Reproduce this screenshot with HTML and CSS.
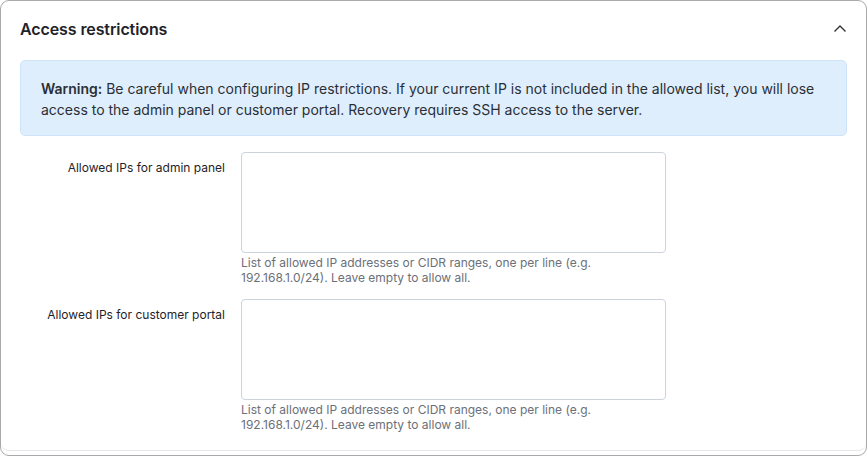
FILE: index.html
```html
<!DOCTYPE html>
<html>
<head>
  <meta charset="UTF-8">
  <title>Access restrictions</title>
  <link rel="stylesheet" href="styles.css">
</head>
<body>
<div class="frame">
  <section class="card">
    <div class="card-head">
      <h2>Access restrictions</h2>
      <svg class="chevron" width="14" height="14" viewBox="0 0 14 14"><path d="M1.5 9.5 L7 4 L12.5 9.5" fill="none" stroke="#333" stroke-width="1.4"/></svg>
    </div>

    <div class="alert">
      <b>Warning:</b> Be careful when configuring IP restrictions. If your current IP is not included in the allowed list, you will lose access to the admin panel or customer portal. Recovery requires SSH access to the server.
    </div>

    <div class="row">
      <label for="admin_ips">Allowed IPs for admin panel</label>
      <div class="field">
        <textarea id="admin_ips"></textarea>
        <p class="help">List of allowed IP addresses or CIDR ranges, one per line (e.g. 192.168.1.0/24). Leave empty to allow all.</p>
      </div>
    </div>

    <div class="row">
      <label for="portal_ips">Allowed IPs for customer portal</label>
      <div class="field">
        <textarea id="portal_ips"></textarea>
        <p class="help">List of allowed IP addresses or CIDR ranges, one per line (e.g. 192.168.1.0/24). Leave empty to allow all.</p>
      </div>
    </div>
  </section>
</div>
</body>
</html>
```

FILE: styles.css
```css
body {
  margin: 0;
  font-family: Inter, "Noto Sans", sans-serif;
  color: #1f2328;
  background: #fff;
}

.frame {
  height: 454px;
  border: 1px solid #a9a9a9;
  border-radius: 9px;
  overflow: hidden;
}

.card {
  height: 450px;
  box-sizing: border-box;
  border-bottom: 1px solid #e3e6ea;
  border-radius: 0 0 8px 8px;
  padding: 0 19px;
}

.card-head {
  display: flex;
  align-items: center;
  justify-content: space-between;
  height: 55px;
}

.card-head h2 {
  margin: 0;
  font-size: 16px;
  font-weight: 600;
  letter-spacing: -0.1px;
}

.alert {
  margin-top: 4px;
  background: #dfeefd;
  border: 1px solid #cfe3f8;
  border-radius: 5px;
  padding: 17px 20px 15px;
  font-size: 14px;
  line-height: 21px;
  color: #2a2f36;
}

.alert b {
  font-weight: 600;
}

.row {
  display: grid;
  grid-template-columns: 205px 425px;
  column-gap: 16px;
  margin-top: 16px;
}

.row + .row {
  margin-top: 14px;
}

.row label {
  text-align: right;
  font-size: 12px;
  padding-top: 8px;
  color: #1f2328;
}

.field textarea {
  display: block;
  width: 425px;
  height: 101px;
  box-sizing: border-box;
  border: 1px solid #cdd3da;
  border-radius: 4px;
  resize: none;
}

.help {
  margin: 2px 0 0;
  font-size: 12px;
  line-height: 15px;
  color: #6b7079;
}
```
